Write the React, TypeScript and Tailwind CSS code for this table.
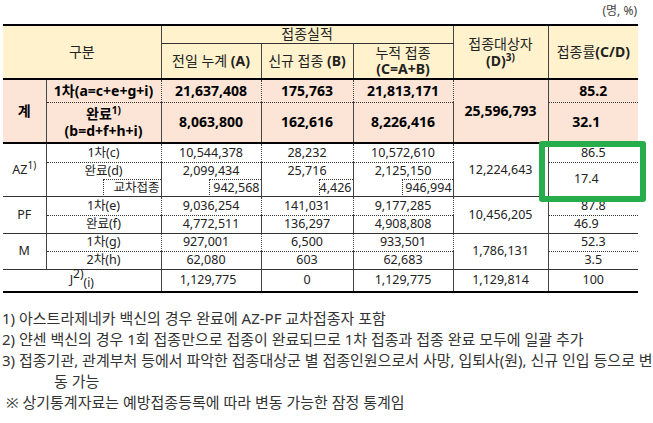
import React from "react";

const F = { fontFamily: '"Noto Sans", "Noto Sans CJK KR", sans-serif' };

const V = "border-r border-r-[#444]";
const DOT = "border-b border-dotted border-b-[#333]";
const SOL = "border-b border-solid border-b-[#333]";

export default function App() {
  return (
    <div className="relative w-[653px] h-[423px] bg-white text-[#222]" style={F}>
      <div className="h-[24px] pr-[16px] pt-[3px] text-right text-[12px] leading-[16px] text-[#444]">(명, %)</div>
      <table className="ml-[3px] w-[635px] table-fixed border-collapse text-center text-[12.5px] leading-[16px]">
        <colgroup>
          <col className="w-[43px]" />
          <col className="w-[115px]" />
          <col className="w-[100px]" />
          <col className="w-[92px]" />
          <col className="w-[100px]" />
          <col className="w-[95px]" />
          <col className="w-[90px]" />
        </colgroup>
        <tbody>
          <tr className="h-[18px] bg-[#fff2cc] border-t-2 border-t-black text-[14px]">
            <td colSpan={2} rowSpan={2} className={`${V} border-b-2 border-b-black p-0`}>구분</td>
            <td colSpan={3} className={`${V} border-b border-b-[#333] p-0`}>접종실적</td>
            <td rowSpan={2} className={`${V} border-b-2 border-b-black p-0 leading-[17px]`}>
              접종대상자
              <br />
              <b>(D)</b>
              <sup className="text-[10px] font-bold">3)</sup>
            </td>
            <td rowSpan={2} className="border-b-2 border-b-black p-0">
              접종률<b>(C/D)</b>
            </td>
          </tr>
          <tr className="h-[36px] bg-[#fff2cc] border-b-2 border-b-black text-[14px]">
            <td className={`${V} p-0`}>전일 누계 <b>(A)</b></td>
            <td className={`${V} p-0`}>신규 접종 <b>(B)</b></td>
            <td className={`${V} p-0 leading-[16px]`}>
              누적 접종
              <br />
              <b>(C=A+B)</b>
            </td>
          </tr>
          <tr className="h-[23px] bg-[#fce4d6] font-bold text-black text-[14px]">
            <td rowSpan={2} className={`${V} border-b-2 border-b-black p-0`}>계</td>
            <td className={`${V} ${DOT} p-0`}>1차(a=c+e+g+i)</td>
            <td className={`${V} ${DOT} p-0`}>21,637,408</td>
            <td className={`${V} ${DOT} p-0`}>175,763</td>
            <td className={`${V} ${DOT} p-0`}>21,813,171</td>
            <td rowSpan={2} className={`${V} border-b-2 border-b-black p-0`}>25,596,793</td>
            <td className={`${DOT} p-0`}>85.2</td>
          </tr>
          <tr className="h-[41px] bg-[#fce4d6] font-bold text-black text-[14px] border-b-2 border-b-black">
            <td className={`${V} p-0 leading-[17px]`}>
              완료<sup className="text-[10px]">1)</sup>
              <br />
              (b=d+f+h+i)
            </td>
            <td className={`${V} p-0`}>8,063,800</td>
            <td className={`${V} p-0`}>162,616</td>
            <td className={`${V} p-0`}>8,226,416</td>
            <td className="p-0 pr-[14px]">32.1</td>
          </tr>
          <tr className="h-[19px]">
            <td rowSpan={3} className={`${V} ${SOL} p-0`}>
              AZ<sup className="text-[10px]">1)</sup>
            </td>
            <td className={`${V} ${DOT} p-0`}>1차(c)</td>
            <td className={`${V} ${DOT} p-0`}>10,544,378</td>
            <td className={`${V} ${DOT} p-0`}>28,232</td>
            <td className={`${V} ${DOT} p-0`}>10,572,610</td>
            <td rowSpan={3} className={`${V} ${SOL} p-0`}>12,224,643</td>
            <td className={`${DOT} p-0`}>86.5</td>
          </tr>
          <tr className="h-[17px]">
            <td className={`${V} p-0`}>완료(d)</td>
            <td className={`${V} p-0`}>2,099,434</td>
            <td className={`${V} p-0`}>25,716</td>
            <td className={`${V} p-0`}>2,125,150</td>
            <td rowSpan={2} className={`${SOL} p-0 pr-[14px]`}>17.4</td>
          </tr>
          <tr className="h-[17px]">
            <td className={`${V} ${SOL} p-0`}>
              <div className="flex justify-end">
                <div className="w-[58px] h-[16px] border-l border-t border-dotted border-[#333] text-right pr-[1px] leading-[15px]">교차접종</div>
              </div>
            </td>
            <td className={`${V} ${SOL} p-0`}>
              <div className="flex justify-end">
                <div className="w-[52px] h-[16px] border-l border-t border-dotted border-[#333] text-right pr-[1px] leading-[15px]">942,568</div>
              </div>
            </td>
            <td className={`${V} ${SOL} p-0`}>
              <div className="flex justify-end">
                <div className="w-[34px] h-[16px] border-l border-t border-dotted border-[#333] text-right pr-[1px] leading-[15px]">4,426</div>
              </div>
            </td>
            <td className={`${V} ${SOL} p-0`}>
              <div className="flex justify-end">
                <div className="w-[51px] h-[16px] border-l border-t border-dotted border-[#333] text-right pr-[1px] leading-[15px]">946,994</div>
              </div>
            </td>
          </tr>
          <tr className="h-[19px]">
            <td rowSpan={2} className={`${V} ${SOL} p-0`}>PF</td>
            <td className={`${V} ${DOT} p-0`}>1차(e)</td>
            <td className={`${V} ${DOT} p-0`}>9,036,254</td>
            <td className={`${V} ${DOT} p-0`}>141,031</td>
            <td className={`${V} ${DOT} p-0`}>9,177,285</td>
            <td rowSpan={2} className={`${V} ${SOL} p-0`}>10,456,205</td>
            <td className={`${DOT} p-0`}>87.8</td>
          </tr>
          <tr className="h-[18px]">
            <td className={`${V} ${SOL} p-0`}>완료(f)</td>
            <td className={`${V} ${SOL} p-0`}>4,772,511</td>
            <td className={`${V} ${SOL} p-0`}>136,297</td>
            <td className={`${V} ${SOL} p-0`}>4,908,808</td>
            <td className={`${SOL} p-0 pr-[14px]`}>46.9</td>
          </tr>
          <tr className="h-[18px]">
            <td rowSpan={2} className={`${V} ${SOL} p-0`}>M</td>
            <td className={`${V} ${DOT} p-0`}>1차(g)</td>
            <td className={`${V} ${DOT} p-0 pr-[10px]`}>927,001</td>
            <td className={`${V} ${DOT} p-0`}>6,500</td>
            <td className={`${V} ${DOT} p-0`}>933,501</td>
            <td rowSpan={2} className={`${V} ${SOL} p-0`}>1,786,131</td>
            <td className={`${DOT} p-0`}>52.3</td>
          </tr>
          <tr className="h-[18px]">
            <td className={`${V} ${SOL} p-0`}>2차(h)</td>
            <td className={`${V} ${SOL} p-0 pr-[10px]`}>62,080</td>
            <td className={`${V} ${SOL} p-0`}>603</td>
            <td className={`${V} ${SOL} p-0`}>62,683</td>
            <td className={`${SOL} p-0`}>3.5</td>
          </tr>
          <tr className="h-[23px] border-b-2 border-b-black">
            <td colSpan={2} className={`${V} p-0`}>
              J<sup className="text-[12px]">2)</sup>
              <sub className="text-[12px]">(i)</sub>
            </td>
            <td className={`${V} p-0 pr-[6px]`}>1,129,775</td>
            <td className={`${V} p-0`}>0</td>
            <td className={`${V} p-0`}>1,129,775</td>
            <td className={`${V} p-0`}>1,129,814</td>
            <td className="p-0">100</td>
          </tr>
        </tbody>
      </table>
      <div className="mt-[15px] pl-[2px] text-[15px] leading-[21px] text-[#333]">
        <div>1) 아스트라제네카 백신의 경우 완료에 AZ-PF 교차접종자 포함</div>
        <div>2) 얀센 백신의 경우 1회 접종만으로 접종이 완료되므로 1차 접종과 접종 완료 모두에 일괄 추가</div>
        <div className="whitespace-nowrap">3) 접종기관, 관계부처 등에서 파악한 접종대상군 별 접종인원으로서 사망, 입퇴사(원), 신규 인입 등으로 변</div>
        <div className="pl-[52px]">동 가능</div>
        <div className="pl-[4px]">※ 상기통계자료는 예방접종등록에 따라 변동 가능한 잠정 통계임</div>
      </div>
      <div className="absolute left-[539px] top-[141px] w-[107px] h-[61px] rounded-[3px] border-[6px] border-[#28ad4c]" />
    </div>
  );
}
